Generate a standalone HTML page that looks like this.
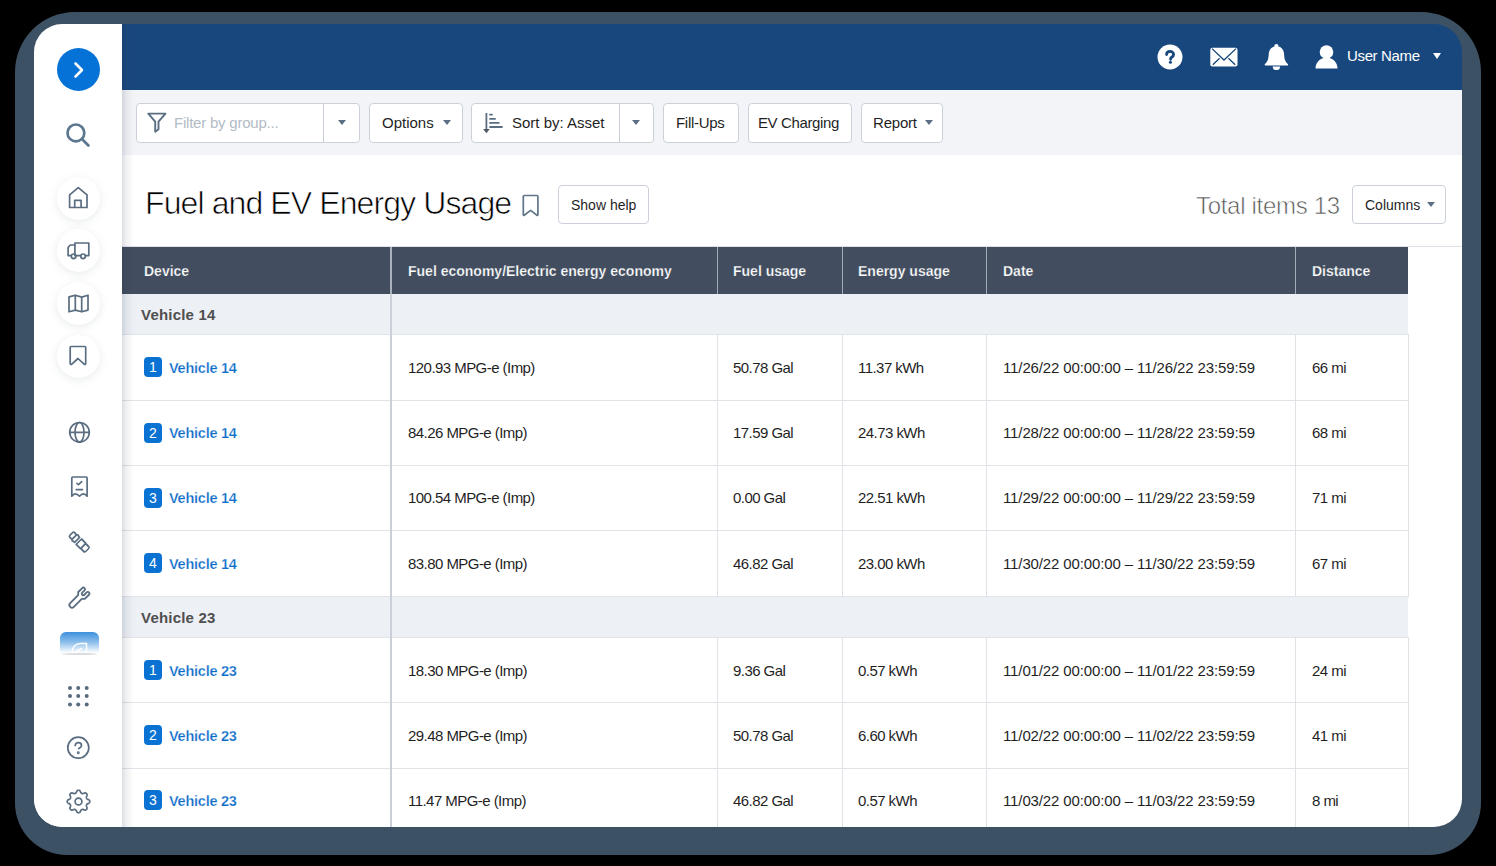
<!DOCTYPE html>
<html><head><meta charset="utf-8">
<style>
html,body{margin:0;padding:0;width:1496px;height:866px;overflow:hidden;background:#000;}
*{box-sizing:border-box;}
body{font-family:"Liberation Sans",sans-serif;}
.frame{position:absolute;left:15px;top:12px;width:1466px;height:843px;background:#3d5164;border-radius:60px 60px 52px 52px;}
.screen{position:absolute;left:34px;top:24px;width:1428px;height:803px;border-radius:28px;overflow:hidden;background:#3d5164;}
.in{position:absolute;left:-34px;top:-24px;width:1496px;height:866px;}
.a{position:absolute;}
.sidebar{position:absolute;left:34px;top:24px;width:88px;height:803px;background:#fff;}
.header{position:absolute;left:122px;top:24px;width:1340px;height:66px;background:#18477e;}
.toolbar{position:absolute;left:122px;top:90px;width:1340px;height:65px;background:#f2f4f7;}
.shadow{position:absolute;left:122px;top:24px;width:12px;height:803px;background:linear-gradient(to right,rgba(30,40,70,.15),rgba(30,40,70,.06) 40%,rgba(30,40,70,0));z-index:5;}
.btn{position:absolute;top:103px;height:40px;background:#fff;border:1px solid #ccd1d9;border-radius:4px;font-size:15px;color:#1f1f1f;}
.btn .t{position:absolute;top:10px;white-space:nowrap;}
.tri{position:absolute;width:0;height:0;border-left:4px solid transparent;border-right:4px solid transparent;border-top:5px solid #5b6f84;}
.ic{position:absolute;fill:none;stroke:#5a6d81;stroke-width:1.7;stroke-linecap:round;stroke-linejoin:round;}
.circ{position:absolute;width:43px;height:43px;border-radius:50%;background:#fff;box-shadow:0 2px 8px rgba(120,130,150,.16);}
.txt{position:absolute;white-space:nowrap;}
.th{position:absolute;top:247px;height:47px;background:#424e5f;}
.thc{position:absolute;top:263px;font-size:14px;font-weight:bold;color:#fff;white-space:nowrap;-webkit-text-stroke:0.25px #424e5f;}
.grp{position:absolute;left:122px;width:1286px;height:41px;background:#edf0f5;}
.hl{position:absolute;left:122px;width:1287px;height:1px;background:#e0e3e8;}
.gl{font-size:15px;font-weight:bold;color:#4f4f4f;letter-spacing:0.2px;}
.cell{position:absolute;font-size:15px;line-height:18px;color:#1f1f1f;white-space:nowrap;letter-spacing:-0.55px;margin-top:0.5px;}
.date{letter-spacing:-0.12px;}
.vl{position:absolute;width:1px;background:#dfe2e7;}
.badge{position:absolute;width:18px;height:20px;border-radius:4px;background:#0a72d3;color:#fff;font-size:14px;text-align:center;line-height:20px;}
.link{position:absolute;font-size:14.5px;line-height:18px;color:#0b6bc8;white-space:nowrap;font-weight:bold;letter-spacing:-0.25px;-webkit-text-stroke:0.25px #fff;margin-top:0.5px;}
</style></head>
<body>
<div class="frame"></div>
<div class="screen"><div class="in">
  <div class="a" style="left:34px;top:90px;width:1428px;height:737px;background:#fff"></div>
  <div class="sidebar"></div>
  <div class="header"></div>
  <div class="toolbar"></div>
  <div class="shadow"></div>
<!-- sidebar -->
<div class="a" style="left:57px;top:48px;width:43px;height:43px;border-radius:50%;background:#0472d6"></div>
<svg class="a" style="left:72px;top:61px" width="14" height="18" viewBox="0 0 14 18"><path d="M3.5 2.5 L10 9 L3.5 15.5" fill="none" stroke="#fff" stroke-width="2.6" stroke-linecap="round" stroke-linejoin="round"/></svg>
<svg class="ic" style="left:64px;top:121px;stroke:#5d7790" width="28" height="28" viewBox="0 0 28 28"><circle cx="11.9" cy="11.9" r="8.4" stroke-width="2.7"/><path d="M18 18 L24.4 24.4" stroke-width="2.8"/></svg>
<div class="circ" style="left:57px;top:177px"></div>
<svg class="ic" style="left:66px;top:185px" width="24" height="25" viewBox="0 0 24 25"><path d="M3.6 22.5V9.8L12.3 2.6 21 9.8V22.5z M8.7 22.5V15.4h6.4v7.1"/></svg>
<div class="circ" style="left:57px;top:229px"></div>
<svg class="ic" style="left:66px;top:238px" width="24" height="24" viewBox="0 0 24 24"><path d="M8.9 17.6V5H22.8V17.6H19.3M14.9 17.6H9.9M5.3 17.6H2.1V9.5L4.4 7H8.9"/><circle cx="7.6" cy="18.3" r="2.3"/><circle cx="17.1" cy="18.3" r="2.3"/></svg>
<div class="circ" style="left:57px;top:282px"></div>
<svg class="ic" style="left:66px;top:291px" width="24" height="24" viewBox="0 0 24 24"><path d="M3 5.9L9.3 4.2 15.7 6.1 22 4.2V19.1L15.7 20.8 9.3 19.1 3 20.8z M9.3 4.2V19.1 M15.7 6.1V20.8"/></svg>
<div class="circ" style="left:57px;top:335px"></div>
<svg class="ic" style="left:66px;top:344px" width="24" height="24" viewBox="0 0 24 24"><path d="M4.2 3.5c0-.6.4-1 1-1h13.5c.6 0 1 .4 1 1V19.5c0 .9-1 1.3-1.6.7L12 14.5 5.8 20.2c-.6.6-1.6.2-1.6-.7z"/></svg>
<svg class="ic" style="left:66px;top:420px" width="25" height="25" viewBox="0 0 25 25"><circle cx="13.5" cy="12.3" r="9.8"/><ellipse cx="13.5" cy="12.3" rx="4.5" ry="9.8"/><path d="M3.7 12.3H23.3"/></svg>
<svg class="ic" style="left:66px;top:474px" width="25" height="25" viewBox="0 0 25 25"><path d="M5.8 22.2V3.9c0-.5.4-.9.9-.9h13.5c.5 0 .9.4.9.9V22.2Q19.4 19.9 17.4 19.9 15.6 19.9 13.5 22.2 11.3 19.9 9.3 19.9 7.5 19.9 5.8 22.2z M11 9.4l1.5 1.3 3.2-3.1 M10.2 15.6h6.3"/></svg>
<svg class="ic" style="left:63px;top:526px" width="32" height="32" viewBox="0 0 32 32"><g transform="translate(16.4 16.2) rotate(-45) scale(1.15 0.96) translate(-16 -16)"><rect x="13.1" y="3.9" width="5.8" height="4.6" rx="1.5" stroke-width="1.6"/><path d="M13.1 8.5H18.9L19.6 9.6 19.1 11.4V12.6H12.9V11.4L12.4 9.6z" stroke-width="1.6"/><path d="M12.7 15.2H19.3V21.6H12.7z" stroke-width="1.6"/><rect x="13" y="21.6" width="6" height="5.9" rx="1.4" stroke-width="1.6"/></g></svg>
<svg class="ic" style="left:66px;top:585px" width="26" height="26" viewBox="0 0 26 26"><g transform="translate(13.2 12.8) rotate(45) scale(1.08)"><path d="M-2.4 9.4A2.4 2.4 0 0 0 2.4 9.4V-1L4.4-3.2V-8.4A1.5 1.5 0 0 0 1.4-8.4V-5.4A1.4 1.4 0 0 1-1.4-5.4V-8.4A1.5 1.5 0 0 0-4.4-8.4V-3.2L-2.4-1z"/></g></svg>
<!-- active item -->
<div class="a" style="left:60px;top:632px;width:39px;height:21px;border-radius:6px 6px 0 0;background:linear-gradient(to bottom,#3d90dd 0%,#8fc0ec 50%,#ffffff 100%)"></div>
<svg class="a" style="left:70px;top:640px" width="20" height="14" viewBox="0 0 20 14"><path d="M2 13c0-6 3.5-9.5 9-9.5h5.5V13 M5 13.5c2-2.5 4-4 6.5-5" fill="none" stroke="#fff" stroke-width="1.5" stroke-linecap="round"/></svg>
<div class="a" style="left:62px;top:653px;width:35px;height:2px;border-radius:50%;background:rgba(140,140,150,.3);filter:blur(.7px)"></div>
<svg class="a" style="left:66px;top:684px" width="24" height="24" viewBox="0 0 24 24" fill="#586b7f"><circle cx="4" cy="4" r="2"/><circle cx="12.2" cy="4" r="2"/><circle cx="20.7" cy="4" r="2"/><circle cx="4" cy="12.1" r="2"/><circle cx="12.2" cy="12.1" r="2"/><circle cx="20.7" cy="12.1" r="2"/><circle cx="4" cy="20.4" r="2"/><circle cx="12.2" cy="20.4" r="2"/><circle cx="20.7" cy="20.4" r="2"/></svg>
<svg class="ic" style="left:66px;top:735px" width="25" height="25" viewBox="0 0 25 25"><circle cx="12.3" cy="12.7" r="10.5"/><path d="M9.2 10.6c0-1.9 1.4-3 3.1-3 1.8 0 3.2 1.2 3.2 2.9 0 1.7-1.3 2.3-2.8 3.1"/><circle cx="12.3" cy="17.8" r=".6" stroke-width="1.7"/></svg>
<svg class="ic" style="left:66px;top:789px" width="25" height="25" viewBox="0 0 25 25"><path d="M12.50 1.25 L12.85 1.27 L13.20 1.33 L13.54 1.46 L13.87 1.69 L14.15 2.05 L14.40 2.56 L14.60 3.09 L14.80 3.54 L15.01 3.86 L15.24 4.08 L15.48 4.24 L15.72 4.36 L15.98 4.47 L16.24 4.55 L16.52 4.61 L16.83 4.62 L17.21 4.54 L17.66 4.36 L18.19 4.13 L18.72 3.94 L19.18 3.89 L19.57 3.96 L19.90 4.11 L20.19 4.31 L20.45 4.55 L20.69 4.81 L20.89 5.10 L21.04 5.43 L21.11 5.82 L21.06 6.28 L20.87 6.81 L20.64 7.34 L20.46 7.79 L20.38 8.17 L20.39 8.48 L20.45 8.76 L20.53 9.02 L20.64 9.28 L20.76 9.52 L20.92 9.76 L21.14 9.99 L21.46 10.20 L21.91 10.40 L22.44 10.60 L22.95 10.85 L23.31 11.13 L23.54 11.46 L23.67 11.80 L23.73 12.15 L23.75 12.50 L23.73 12.85 L23.67 13.20 L23.54 13.54 L23.31 13.87 L22.95 14.15 L22.44 14.40 L21.91 14.60 L21.46 14.80 L21.14 15.01 L20.92 15.24 L20.76 15.48 L20.64 15.72 L20.53 15.98 L20.45 16.24 L20.39 16.52 L20.38 16.83 L20.46 17.21 L20.64 17.66 L20.87 18.19 L21.06 18.72 L21.11 19.18 L21.04 19.57 L20.89 19.90 L20.69 20.19 L20.45 20.45 L20.19 20.69 L19.90 20.89 L19.57 21.04 L19.18 21.11 L18.72 21.06 L18.19 20.87 L17.66 20.64 L17.21 20.46 L16.83 20.38 L16.52 20.39 L16.24 20.45 L15.98 20.53 L15.72 20.64 L15.48 20.76 L15.24 20.92 L15.01 21.14 L14.80 21.46 L14.60 21.91 L14.40 22.44 L14.15 22.95 L13.87 23.31 L13.54 23.54 L13.20 23.67 L12.85 23.73 L12.50 23.75 L12.15 23.73 L11.80 23.67 L11.46 23.54 L11.13 23.31 L10.85 22.95 L10.60 22.44 L10.40 21.91 L10.20 21.46 L9.99 21.14 L9.76 20.92 L9.52 20.76 L9.28 20.64 L9.02 20.53 L8.76 20.45 L8.48 20.39 L8.17 20.38 L7.79 20.46 L7.34 20.64 L6.81 20.87 L6.28 21.06 L5.82 21.11 L5.43 21.04 L5.10 20.89 L4.81 20.69 L4.55 20.45 L4.31 20.19 L4.11 19.90 L3.96 19.57 L3.89 19.18 L3.94 18.72 L4.13 18.19 L4.36 17.66 L4.54 17.21 L4.62 16.83 L4.61 16.52 L4.55 16.24 L4.47 15.98 L4.36 15.72 L4.24 15.48 L4.08 15.24 L3.86 15.01 L3.54 14.80 L3.09 14.60 L2.56 14.40 L2.05 14.15 L1.69 13.87 L1.46 13.54 L1.33 13.20 L1.27 12.85 L1.25 12.50 L1.27 12.15 L1.33 11.80 L1.46 11.46 L1.69 11.13 L2.05 10.85 L2.56 10.60 L3.09 10.40 L3.54 10.20 L3.86 9.99 L4.08 9.76 L4.24 9.52 L4.36 9.28 L4.47 9.02 L4.55 8.76 L4.61 8.48 L4.62 8.17 L4.54 7.79 L4.36 7.34 L4.13 6.81 L3.94 6.28 L3.89 5.82 L3.96 5.43 L4.11 5.10 L4.31 4.81 L4.55 4.55 L4.81 4.31 L5.10 4.11 L5.43 3.96 L5.82 3.89 L6.28 3.94 L6.81 4.13 L7.34 4.36 L7.79 4.54 L8.17 4.62 L8.48 4.61 L8.76 4.55 L9.02 4.47 L9.28 4.36 L9.52 4.24 L9.76 4.08 L9.99 3.86 L10.20 3.54 L10.40 3.09 L10.60 2.56 L10.85 2.05 L11.13 1.69 L11.46 1.46 L11.80 1.33 L12.15 1.27 L12.50 1.25z"/><circle cx="12.5" cy="12.5" r="3.4"/></svg>

<!-- header icons -->
<svg class="a" style="left:1157px;top:44px" width="26" height="26" viewBox="0 0 26 26">
  <circle cx="13" cy="13" r="12.5" fill="#fff"/>
  <path d="M9.6 10.6c0-2 1.6-3.2 3.5-3.2s3.5 1.2 3.5 3c0 1.5-.9 2.2-1.9 2.8-.8.5-1.1.9-1.1 1.8v.3" fill="none" stroke="#18477e" stroke-width="2.8" stroke-linecap="round"/>
  <circle cx="13.4" cy="18.3" r="1.5" fill="#18477e"/>
</svg>
<svg class="a" style="left:1210px;top:47px" width="28" height="20" viewBox="0 0 28 20">
  <rect x="0.3" y="0.8" width="27.2" height="18.6" rx="2" fill="#fff"/>
  <path d="M2 1.6 L14 13 L26 1.6 M2.8 17.8 L9.6 11.2 M25.2 17.8 L18.4 11.2" fill="none" stroke="#18477e" stroke-width="1.3"/>
</svg>
<svg class="a" style="left:1264px;top:43px" width="25" height="28" viewBox="0 0 25 28" fill="#fff"><circle cx="12.4" cy="3" r="2.1"/><path d="M12.4 3.2C7.6 3.2 4.9 6.6 4.7 11.2 4.5 15.8 3.9 18.2 1 20.9 .4 21.5 .6 22.4 1.5 22.4H23.3C24.2 22.4 24.4 21.5 23.8 20.9 20.9 18.2 20.3 15.8 20.1 11.2 19.9 6.6 17.2 3.2 12.4 3.2z"/><path d="M8.7 23.4A3.7 3.7 0 0 0 16.1 23.4z"/></svg>
<svg class="a" style="left:1315px;top:45px" width="23" height="24" viewBox="0 0 23 24">
  <circle cx="11.5" cy="7" r="6.8" fill="#fff"/>
  <path d="M0.5 23.5c0-6 4.6-11 11-11s11 5 11 11z" fill="#fff"/>
</svg>
<div class="txt" style="left:1347px;top:47px;font-size:15px;color:#fff;letter-spacing:-0.35px">User Name</div>
<div class="tri" style="left:1433px;top:53px;border-top:6px solid #fff;border-left-width:4.5px;border-right-width:4.5px"></div>

<!-- toolbar -->
<div class="btn" style="left:136px;width:224px">
  <svg class="a" style="left:9px;top:7.3px" width="22" height="22" viewBox="0 0 22 22"><path d="M2.3 2.6h17.2l-7 8v7.7l-3.3 2.4V10.6z" fill="none" stroke="#5a6d81" stroke-width="1.9" stroke-linejoin="round"/></svg>
  <div class="t" style="left:37px;color:#b3bbc5;letter-spacing:-0.22px">Filter by group...</div>
  <div class="a" style="left:186px;top:0;width:1px;height:38px;background:#c8ced6"></div>
  <div class="tri" style="left:201px;top:16px"></div>
</div>
<div class="btn" style="left:369px;width:94px">
  <div class="t" style="left:12px">Options</div>
  <div class="tri" style="left:73px;top:16px"></div>
</div>
<div class="btn" style="left:471px;width:183px">
  <svg class="a" style="left:11px;top:9px" width="22" height="22" viewBox="0 0 22 22"><path d="M3.4 0.4V16.6M7 1.6H9M7 5.8H12.1M7 9.9H15.8M7 14H19" fill="none" stroke="#5a6d81" stroke-width="1.8" stroke-linecap="round"/><path d="M0.1 16.1H6.7L3.4 20.2z" fill="#4f5864"/></svg>
  <div class="t" style="left:40px">Sort by: Asset</div>
  <div class="a" style="left:147px;top:0;width:1px;height:38px;background:#c8ced6"></div>
  <div class="tri" style="left:160px;top:16px"></div>
</div>
<div class="btn" style="left:663px;width:76px">
  <div class="t" style="left:12px;letter-spacing:-0.3px">Fill-Ups</div>
</div>
<div class="btn" style="left:748px;width:104px">
  <div class="t" style="left:9px;letter-spacing:-0.38px">EV Charging</div>
</div>
<div class="btn" style="left:861px;width:82px">
  <div class="t" style="left:11px;letter-spacing:-0.2px">Report</div>
  <div class="tri" style="left:63px;top:16px"></div>
</div>

<!-- title -->
<div class="txt" style="left:145px;top:185px;font-size:32px;color:#000;letter-spacing:-0.9px;-webkit-text-stroke:0.7px #fff;paint-order:normal">Fuel and EV Energy Usage</div>
<svg class="a" style="left:521px;top:194px" width="20" height="24" viewBox="0 0 20 24"><path d="M2.3 2.5c0-.6.4-1 1-1h12.6c.6 0 1 .4 1 1v18.2c0 .5-.5.8-.9.5L9.6 16.4 3.2 21.2c-.4.3-.9 0-.9-.5z" fill="none" stroke="#62768a" stroke-width="1.7" stroke-linejoin="round"/></svg>
<div class="btn" style="left:558px;top:185px;width:91px;height:39px;font-size:14px">
  <div class="t" style="left:12px;top:10.5px">Show help</div>
</div>
<div class="txt" style="left:1196px;top:192px;font-size:24px;color:#555;letter-spacing:-0.3px;-webkit-text-stroke:0.6px #fff">Total items 13</div>
<div class="btn" style="left:1352px;top:185px;width:94px;height:39px;font-size:14px">
  <div class="t" style="left:12px;top:10.5px">Columns</div>
  <div class="tri" style="left:74px;top:16px"></div>
</div>
<div class="a" style="left:122px;top:246px;width:1340px;height:1px;background:#dde1e8"></div>

<!-- TABLE -->
<div class="th" style="left:122px;width:1286px"></div>
<div class="a" style="left:717px;top:247px;width:1px;height:47px;background:#a4acb8"></div>
<div class="a" style="left:842px;top:247px;width:1px;height:47px;background:#a4acb8"></div>
<div class="a" style="left:986px;top:247px;width:1px;height:47px;background:#a4acb8"></div>
<div class="a" style="left:1295px;top:247px;width:1px;height:47px;background:#a4acb8"></div>
<div class="a" style="left:390px;top:247px;width:2px;height:47px;background:#a9b1bc"></div>
<div class="thc" style="left:144px">Device</div>
<div class="thc" style="left:408px">Fuel economy/Electric energy economy</div>
<div class="thc" style="left:733px">Fuel usage</div>
<div class="thc" style="left:858px">Energy usage</div>
<div class="thc" style="left:1003px">Date</div>
<div class="thc" style="left:1312px">Distance</div>
<div class="grp" style="top:294px;height:40px"></div>
<div class="grp" style="top:597px;height:40px"></div>
<div class="txt gl" style="left:141px;top:306px">Vehicle 14</div>
<div class="txt gl" style="left:141px;top:609px">Vehicle 23</div>
<div class="hl" style="top:334px"></div>
<div class="hl" style="top:400px"></div>
<div class="hl" style="top:465px"></div>
<div class="hl" style="top:530px"></div>
<div class="hl" style="top:596px"></div>
<div class="hl" style="top:637px"></div>
<div class="hl" style="top:702px"></div>
<div class="hl" style="top:768px"></div>
<div class="vl" style="left:1408px;top:334px;height:262px"></div><div class="vl" style="left:1408px;top:637px;height:190px"></div>
<div class="a" style="left:390px;top:294px;width:2px;height:533px;background:#cacfd8;z-index:3"></div>
<div class="vl" style="left:717px;top:334px;height:262px"></div>
<div class="vl" style="left:717px;top:637px;height:190px"></div>
<div class="vl" style="left:842px;top:334px;height:262px"></div>
<div class="vl" style="left:842px;top:637px;height:190px"></div>
<div class="vl" style="left:986px;top:334px;height:262px"></div>
<div class="vl" style="left:986px;top:637px;height:190px"></div>
<div class="vl" style="left:1295px;top:334px;height:262px"></div>
<div class="vl" style="left:1295px;top:637px;height:190px"></div>
<div class="badge" style="left:144px;top:357px">1</div>
<div class="link" style="left:169px;top:358px">Vehicle 14</div>
<div class="cell" style="left:408px;top:358px">120.93 MPG-e (Imp)</div>
<div class="cell" style="left:733px;top:358px">50.78 Gal</div>
<div class="cell" style="left:858px;top:358px">11.37 kWh</div>
<div class="cell date" style="left:1003px;top:358px">11/26/22 00:00:00 – 11/26/22 23:59:59</div>
<div class="cell" style="left:1312px;top:358px">66 mi</div>
<div class="badge" style="left:144px;top:422.5px">2</div>
<div class="link" style="left:169px;top:423.5px">Vehicle 14</div>
<div class="cell" style="left:408px;top:423.5px">84.26 MPG-e (Imp)</div>
<div class="cell" style="left:733px;top:423.5px">17.59 Gal</div>
<div class="cell" style="left:858px;top:423.5px">24.73 kWh</div>
<div class="cell date" style="left:1003px;top:423.5px">11/28/22 00:00:00 – 11/28/22 23:59:59</div>
<div class="cell" style="left:1312px;top:423.5px">68 mi</div>
<div class="badge" style="left:144px;top:487.5px">3</div>
<div class="link" style="left:169px;top:488.5px">Vehicle 14</div>
<div class="cell" style="left:408px;top:488.5px">100.54 MPG-e (Imp)</div>
<div class="cell" style="left:733px;top:488.5px">0.00 Gal</div>
<div class="cell" style="left:858px;top:488.5px">22.51 kWh</div>
<div class="cell date" style="left:1003px;top:488.5px">11/29/22 00:00:00 – 11/29/22 23:59:59</div>
<div class="cell" style="left:1312px;top:488.5px">71 mi</div>
<div class="badge" style="left:144px;top:553px">4</div>
<div class="link" style="left:169px;top:554px">Vehicle 14</div>
<div class="cell" style="left:408px;top:554px">83.80 MPG-e (Imp)</div>
<div class="cell" style="left:733px;top:554px">46.82 Gal</div>
<div class="cell" style="left:858px;top:554px">23.00 kWh</div>
<div class="cell date" style="left:1003px;top:554px">11/30/22 00:00:00 – 11/30/22 23:59:59</div>
<div class="cell" style="left:1312px;top:554px">67 mi</div>
<div class="badge" style="left:144px;top:660px">1</div>
<div class="link" style="left:169px;top:661px">Vehicle 23</div>
<div class="cell" style="left:408px;top:661px">18.30 MPG-e (Imp)</div>
<div class="cell" style="left:733px;top:661px">9.36 Gal</div>
<div class="cell" style="left:858px;top:661px">0.57 kWh</div>
<div class="cell date" style="left:1003px;top:661px">11/01/22 00:00:00 – 11/01/22 23:59:59</div>
<div class="cell" style="left:1312px;top:661px">24 mi</div>
<div class="badge" style="left:144px;top:725px">2</div>
<div class="link" style="left:169px;top:726px">Vehicle 23</div>
<div class="cell" style="left:408px;top:726px">29.48 MPG-e (Imp)</div>
<div class="cell" style="left:733px;top:726px">50.78 Gal</div>
<div class="cell" style="left:858px;top:726px">6.60 kWh</div>
<div class="cell date" style="left:1003px;top:726px">11/02/22 00:00:00 – 11/02/22 23:59:59</div>
<div class="cell" style="left:1312px;top:726px">41 mi</div>
<div class="badge" style="left:144px;top:790px">3</div>
<div class="link" style="left:169px;top:791px">Vehicle 23</div>
<div class="cell" style="left:408px;top:791px">11.47 MPG-e (Imp)</div>
<div class="cell" style="left:733px;top:791px">46.82 Gal</div>
<div class="cell" style="left:858px;top:791px">0.57 kWh</div>
<div class="cell date" style="left:1003px;top:791px">11/03/22 00:00:00 – 11/03/22 23:59:59</div>
<div class="cell" style="left:1312px;top:791px">8 mi</div>
<!-- /TABLE -->
</div></div>
</body></html>
